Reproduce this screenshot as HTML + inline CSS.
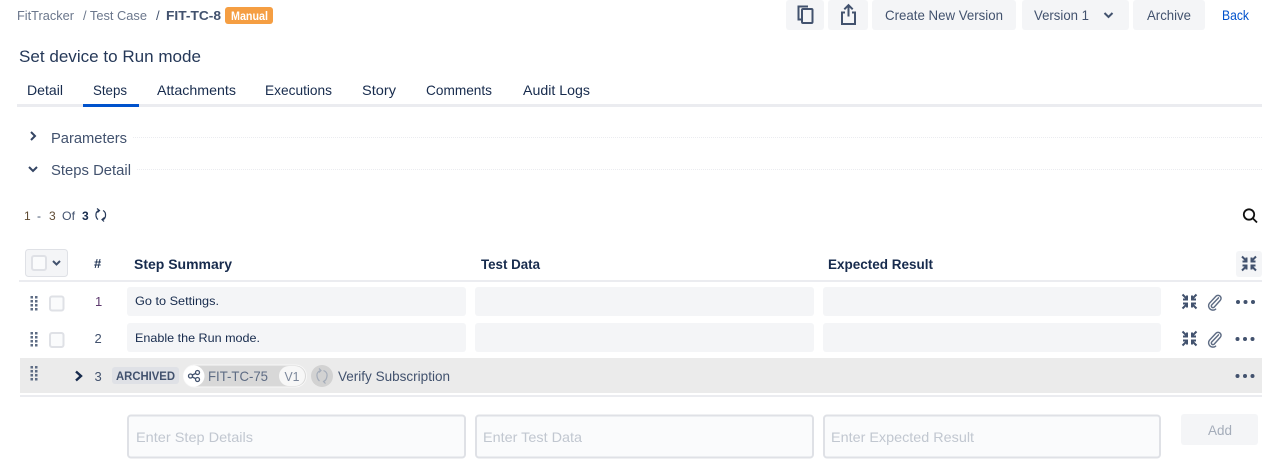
<!DOCTYPE html>
<html><head><meta charset="utf-8"><title>FIT-TC-8</title>
<style>
html,body{margin:0;padding:0;background:#fff;width:1280px;height:465px;overflow:hidden}
svg{display:block}
text{font-family:"Liberation Sans",sans-serif;font-size:14px;fill:#42526e}
.d{fill:#172b4d}
.b{font-weight:bold}
.ph{fill:#c1c7d0}
</style></head>
<body>
<svg width="1280" height="465" viewBox="0 0 1280 465" xmlns="http://www.w3.org/2000/svg">
<defs>
<g id="comp" fill="#42526e" stroke="#42526e">
<path d="M0.5 0.5L5 5M5 1.5V5.5H1" fill="none" stroke-width="2"/>
<path d="M14.5 0.5L10 5M10 1.5V5.5H14" fill="none" stroke-width="2"/>
<path d="M0.5 14.5L5 10M5 13.5V9.500H1" fill="none" stroke-width="2"/>
<path d="M14.500 14.500L10 10M10 13.500V9.500H14" fill="none" stroke-width="2"/>
</g>
<g id="clip"><path d="M12.500 4.500L5.500 11.800a1.700 1.700 0 0 0 2.500 2.400L14.300 7.200a3.100 3.100 0 0 0-4.500-4.300L3 10.200a4.500 4.500 0 0 0 6.500 6.100" transform="translate(0,-1.500) scale(0.96)" fill="none" stroke="#5e6c84" stroke-width="1.500" stroke-linecap="round"/></g>
<g id="dots" fill="#42526e"><circle cx="2" cy="2" r="2"/><circle cx="9.500" cy="2" r="2"/><circle cx="17" cy="2" r="2"/></g>
<g id="drag" fill="#5e6c84"><rect x="0" y="0" width="2.500" height="2.500"/><rect x="4.500" y="0" width="2.500" height="2.500"/><rect x="0" y="4" width="2.500" height="2.500"/><rect x="4.500" y="4" width="2.500" height="2.500"/><rect x="0" y="8" width="2.500" height="2.500"/><rect x="4.500" y="8" width="2.500" height="2.500"/><rect x="0" y="12" width="2.500" height="2.500"/><rect x="4.500" y="12" width="2.500" height="2.500"/></g>
</defs>

<!-- breadcrumb -->
<text x="17" y="20" style="font-size:13px;fill:#6b778c" textLength="57" lengthAdjust="spacingAndGlyphs">FitTracker</text>
<text x="83" y="20" style="font-size:13px;fill:#6b778c" textLength="64" lengthAdjust="spacingAndGlyphs">/ Test Case</text>
<text x="156" y="20" style="font-size:13px">/</text>
<text x="166" y="20" class="b" style="font-size:13px" textLength="55" lengthAdjust="spacingAndGlyphs">FIT-TC-8</text>
<rect x="225" y="7" width="48" height="17" rx="3" fill="#f59e42"/>
<text x="231" y="20" class="b" style="font-size:11.500px;fill:#fff" textLength="37" lengthAdjust="spacingAndGlyphs">Manual</text>

<!-- top buttons -->
<rect x="786" y="0" width="38" height="30" rx="3" fill="#f4f5f7"/>
<rect x="828" y="0" width="40" height="30" rx="3" fill="#f4f5f7"/>
<rect x="872" y="0" width="144" height="30" rx="3" fill="#f4f5f7"/>
<rect x="1022" y="0" width="107" height="30" rx="3" fill="#f4f5f7"/>
<rect x="1133" y="0" width="72" height="30" rx="3" fill="#f4f5f7"/>
<path d="M801.500 19.500H798.500V6.500H808" fill="none" stroke="#42526e" stroke-width="2"/>
<rect x="802" y="9" width="10.500" height="14" rx="1" fill="none" stroke="#42526e" stroke-width="2"/>
<path d="M848.500 16.500V6M844.300 9.300L848.500 5.200L852.700 9.300" fill="none" stroke="#42526e" stroke-width="2"/>
<path d="M845 12.500H842V24H855V12.500H852" fill="none" stroke="#42526e" stroke-width="2"/>
<text x="885" y="20" textLength="118" lengthAdjust="spacingAndGlyphs">Create New Version</text>
<text x="1034" y="20" textLength="55" lengthAdjust="spacingAndGlyphs">Version 1</text>
<path d="M1104.500 13L1108.500 17L1112.500 13" fill="none" stroke="#42526e" stroke-width="2"/>
<text x="1147" y="20" textLength="44" lengthAdjust="spacingAndGlyphs">Archive</text>
<text x="1222" y="20" style="fill:#0052cc" textLength="27" lengthAdjust="spacingAndGlyphs">Back</text>

<!-- title -->
<text x="19" y="62" style="font-size:17px;fill:#253858" textLength="182" lengthAdjust="spacingAndGlyphs">Set device to Run mode</text>

<!-- tabs -->
<rect x="17" y="104" width="1245" height="3" fill="#ebecf0"/>
<rect x="83" y="104" width="56" height="3" fill="#0052cc"/>
<text x="27" y="95" class="d" textLength="36" lengthAdjust="spacingAndGlyphs">Detail</text>
<text x="93" y="95" class="d" textLength="34" lengthAdjust="spacingAndGlyphs">Steps</text>
<text x="157" y="95" class="d" textLength="79" lengthAdjust="spacingAndGlyphs">Attachments</text>
<text x="265" y="95" class="d" textLength="67" lengthAdjust="spacingAndGlyphs">Executions</text>
<text x="362" y="95" class="d" textLength="34" lengthAdjust="spacingAndGlyphs">Story</text>
<text x="426" y="95" class="d" textLength="66" lengthAdjust="spacingAndGlyphs">Comments</text>
<text x="523" y="95" class="d" textLength="67" lengthAdjust="spacingAndGlyphs">Audit Logs</text>

<!-- sections -->
<path d="M31 132L35 136L31 140" fill="none" stroke="#344563" stroke-width="2"/>
<text x="51" y="143" style="font-size:15px" textLength="76" lengthAdjust="spacingAndGlyphs">Parameters</text>
<line x1="133" y1="137.500" x2="1262" y2="137.500" stroke="#ebecf0" stroke-dasharray="1 1"/>
<path d="M29 167L33 171L37 167" fill="none" stroke="#344563" stroke-width="2"/>
<text x="51" y="175" style="font-size:15px" textLength="80" lengthAdjust="spacingAndGlyphs">Steps Detail</text>
<line x1="137" y1="169.500" x2="1262" y2="169.500" stroke="#ebecf0" stroke-dasharray="1 1"/>

<!-- pagination -->
<text x="24" y="220" style="font-size:12px;fill:#5e4a32">1</text>
<text x="37" y="220" style="font-size:12px">-</text>
<text x="49" y="220" style="font-size:12px;fill:#5e4a32">3</text>
<text x="62" y="220" style="font-size:12px" textLength="13" lengthAdjust="spacingAndGlyphs">Of</text>
<text x="82" y="220" class="b" style="font-size:12px;fill:#172b4d">3</text>
<path d="M99 210.500H98.500Q95.500 212 96 216Q96.500 218.500 98 219.500M97 208.500L99.500 210.500L97.500 212.500M103 210.500Q106 212 105.500 216Q105 219 103 219.500H102.500M104.500 217.500L102 219.500L104 221.500" fill="none" stroke="#253858" stroke-width="1.200"/>
<circle cx="1249" cy="214.500" r="5.200" fill="none" stroke="#111" stroke-width="1.800"/>
<path d="M1253 218.500L1257 222.500" stroke="#111" stroke-width="1.800"/>

<!-- table header -->
<rect x="25.500" y="249.500" width="42" height="27" rx="3" fill="#f4f5f7" stroke="#dfe1e6"/>
<rect x="32" y="256" width="14" height="14" rx="2" fill="#fafbfc" stroke="#dfe1e6" stroke-width="2"/>
<path d="M53 261L56.500 264.500L60 261" fill="none" stroke="#42526e" stroke-width="2"/>
<text x="94" y="268" class="b" style="font-size:13px;fill:#253858">#</text>
<text x="134" y="269" class="b" style="font-size:13.500px;fill:#172b4d" textLength="98" lengthAdjust="spacingAndGlyphs">Step Summary</text>
<text x="481" y="269" class="b" style="font-size:13.500px;fill:#172b4d" textLength="59" lengthAdjust="spacingAndGlyphs">Test Data</text>
<text x="828" y="269" class="b" style="font-size:13.500px;fill:#172b4d" textLength="105" lengthAdjust="spacingAndGlyphs">Expected Result</text>
<rect x="1236" y="251" width="26" height="26" rx="3" fill="#f4f5f7"/>
<use href="#comp" x="1241.500" y="256"/>
<rect x="19" y="280" width="1243" height="2" fill="#ebecf0"/>

<!-- row 1 -->
<use href="#drag" x="30.500" y="296"/>
<rect x="50" y="296.500" width="13.500" height="14" rx="2" fill="#fafbfc" stroke="#dfe1e6" stroke-width="2"/>
<text x="95" y="306" style="font-size:13px;fill:#5e3a6e">1</text>
<rect x="127" y="287" width="339" height="29" rx="3" fill="#f4f5f7"/>
<rect x="475" y="287" width="339" height="29" rx="3" fill="#f4f5f7"/>
<rect x="823" y="287" width="338" height="29" rx="3" fill="#f4f5f7"/>
<text x="135" y="305" style="font-size:12px;fill:#172b4d" textLength="84" lengthAdjust="spacingAndGlyphs">Go to Settings.</text>
<use href="#comp" x="1182" y="294"/>
<use href="#clip" x="1206.500" y="295"/>
<use href="#dots" x="1236" y="300"/>

<!-- row 2 -->
<use href="#drag" x="30.500" y="332"/>
<rect x="50" y="333" width="13.500" height="14" rx="2" fill="#fafbfc" stroke="#dfe1e6" stroke-width="2"/>
<text x="94.500" y="343" style="font-size:13px">2</text>
<rect x="127" y="323" width="339" height="29" rx="3" fill="#f4f5f7"/>
<rect x="475" y="323" width="339" height="29" rx="3" fill="#f4f5f7"/>
<rect x="823" y="323" width="338" height="29" rx="3" fill="#f4f5f7"/>
<text x="135" y="342" style="font-size:12px;fill:#172b4d" textLength="125" lengthAdjust="spacingAndGlyphs">Enable the Run mode.</text>
<use href="#comp" x="1182" y="331"/>
<use href="#clip" x="1206.500" y="332"/>
<use href="#dots" x="1235.500" y="337"/>

<!-- row 3 -->
<rect x="20" y="358" width="1242" height="35" fill="#ebebeb"/>
<rect x="20" y="395" width="1242" height="2" fill="#ebecf0"/>
<use href="#drag" x="30.500" y="366"/>
<path d="M76 371.500L81 376L76 380.500" fill="none" stroke="#172b4d" stroke-width="2.400"/>
<text x="94.500" y="381" style="font-size:13px">3</text>
<rect x="112" y="367" width="67" height="17" rx="3" fill="#dfe1e6"/>
<text x="116" y="380" class="b" style="font-size:11.500px" textLength="59" lengthAdjust="spacingAndGlyphs">ARCHIVED</text>
<rect x="183.500" y="365" width="123" height="22" rx="11" fill="#d8d8d8" stroke="#f7f7f7"/>
<circle cx="194" cy="376" r="10.500" fill="#fff"/>
<g fill="none" stroke="#42526e" stroke-width="1.300"><circle cx="190.500" cy="376" r="2"/><circle cx="197.500" cy="372.500" r="2"/><circle cx="197.500" cy="379.500" r="2"/><path d="M192.300 375L195.700 373.400M192.300 377L195.700 378.600"/></g>
<text x="208" y="381" style="font-size:14px;fill:#5e6c84" textLength="60" lengthAdjust="spacingAndGlyphs">FIT-TC-75</text>
<rect x="279" y="366" width="26" height="20" rx="10" fill="#f7f7f7"/>
<text x="284.500" y="381" style="font-size:12.500px;fill:#7a869a" textLength="15" lengthAdjust="spacingAndGlyphs">V1</text>
<circle cx="322" cy="376" r="11" fill="#d2d2d2"/>
<path d="M320.500 370.500Q316.500 372 317 376Q317.500 379.500 319.500 381M319 368.500L321 370.500L319 372.500M323.500 370.500Q327.500 372 327 376Q326.500 380 324 381.500M326 379.500L323.500 381.500L325.500 383.500" fill="none" stroke="#a5adba" stroke-width="1.200"/>
<text x="338" y="381" textLength="112" lengthAdjust="spacingAndGlyphs">Verify Subscription</text>
<use href="#dots" x="1235.500" y="374"/>

<!-- new step -->
<rect x="128" y="415.500" width="337" height="42" rx="3" fill="#fafbfc" stroke="#dfe1e6" stroke-width="2"/>
<rect x="476" y="415.500" width="337" height="42" rx="3" fill="#fafbfc" stroke="#dfe1e6" stroke-width="2"/>
<rect x="824" y="415.500" width="336" height="42" rx="3" fill="#fafbfc" stroke="#dfe1e6" stroke-width="2"/>
<text x="136" y="442" class="ph" style="font-size:14px" textLength="117" lengthAdjust="spacingAndGlyphs">Enter Step Details</text>
<text x="483" y="442" class="ph" style="font-size:14px" textLength="99" lengthAdjust="spacingAndGlyphs">Enter Test Data</text>
<text x="831" y="442" class="ph" style="font-size:14px" textLength="143" lengthAdjust="spacingAndGlyphs">Enter Expected Result</text>
<rect x="1181" y="414" width="77" height="31" rx="3" fill="#f4f5f7"/>
<text x="1208" y="435" style="font-size:14px;fill:#a5adba" textLength="24" lengthAdjust="spacingAndGlyphs">Add</text>
</svg>
</body></html>
